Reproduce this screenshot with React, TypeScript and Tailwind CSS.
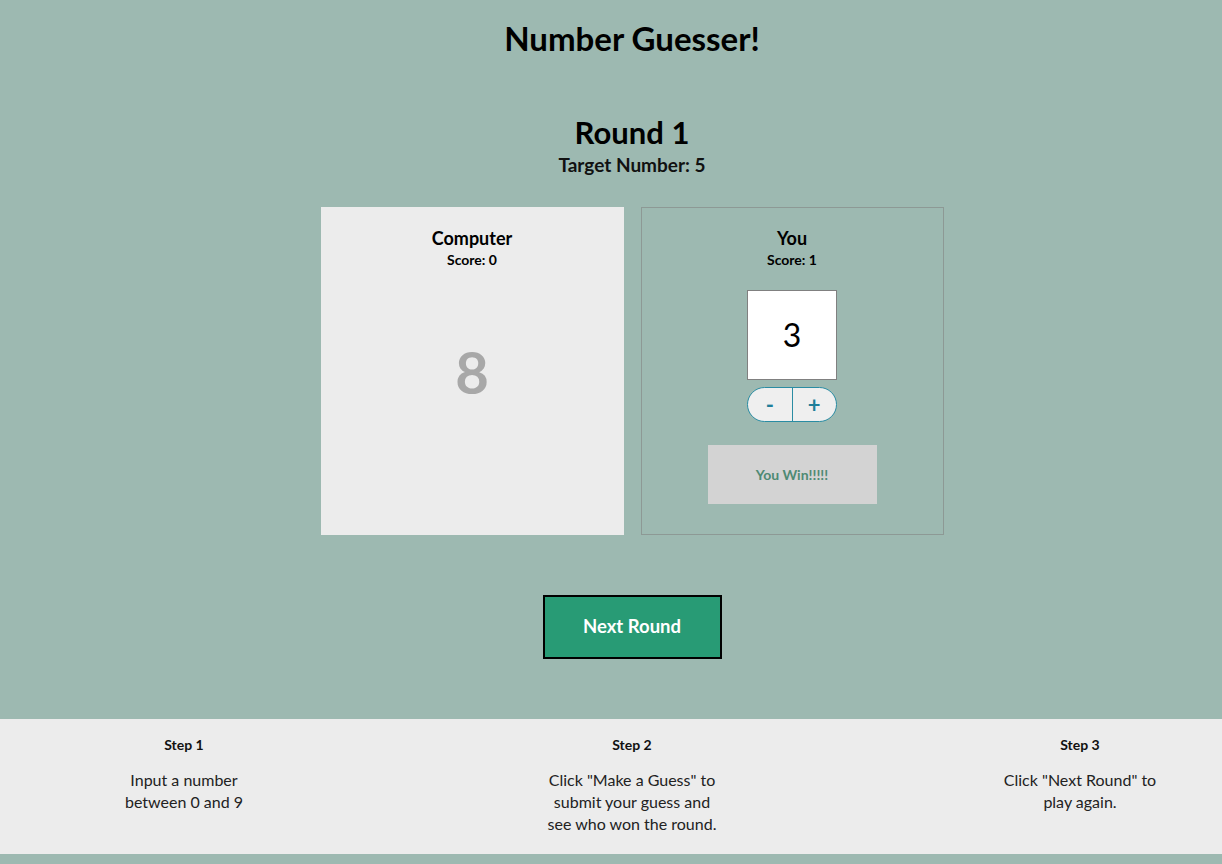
import * as React from 'react';

const font = { fontFamily: 'Lato, "Noto Sans", sans-serif' };

function Step({ title, lines }: { title: string; lines: string[] }) {
  return (
    <div className="w-[200px] text-center">
      <h3 className="text-[14px] leading-[17px] font-bold text-[#111]">{title}</h3>
      <p className="mt-[16px] text-[16px] leading-[22px] text-[#222] whitespace-nowrap">
        {lines.map((l, i) => (
          <React.Fragment key={i}>
            {l}
            {i < lines.length - 1 && <br />}
          </React.Fragment>
        ))}
      </p>
    </div>
  );
}

function App() {
  return (
    <div className="w-full overflow-hidden bg-[#9db9b1] min-h-screen" style={font}>
      <div className="w-[1264px] flex flex-col items-center">
        <h1 className="mt-[19px] text-[33px] leading-[38px] font-bold text-black">Number Guesser!</h1>

        <h2 className="mt-[57px] text-[31px] leading-[36px] font-bold text-black">Round 1</h2>
        <p className="mt-[4px] text-[19px] leading-[22px] font-bold text-[#111]">Target Number: 5</p>

        <div className="mt-[31px] flex gap-[17px]">
          <div className="w-[303px] h-[328px] bg-[#ececec] flex flex-col items-center pt-[20px]">
            <h3 className="text-[18px] leading-[22px] font-bold text-black">Computer</h3>
            <p className="mt-[3px] text-[14px] leading-[16px] font-bold text-black">Score: 0</p>
            <div className="mt-[75px] text-[58px] leading-[58px] font-bold text-[#a8a8a8]">8</div>
          </div>

          <div className="w-[303px] h-[328px] border border-[#8d9995] flex flex-col items-center pt-[19px]">
            <h3 className="text-[18px] leading-[22px] font-bold text-black">You</h3>
            <p className="mt-[3px] text-[14px] leading-[16px] font-bold text-black">Score: 1</p>
            <div className="mt-[22px] w-[90px] h-[90px] bg-white border border-[#808080] flex items-center justify-center text-[32px] text-black">
              3
            </div>
            <div className="mt-[7px] w-[90px] h-[35px] rounded-full border border-[#2a8ca3] bg-[#efefef] flex overflow-hidden">
              <button className="flex-1 border-r border-[#2a8ca3] text-[22px] font-bold text-[#1f7f9a] leading-none">-</button>
              <button className="flex-1 text-[22px] font-bold text-[#1f7f9a] leading-none">+</button>
            </div>
            <div className="mt-[23px] w-[169px] h-[59px] bg-[#d3d3d3] flex items-center justify-center text-[14px] font-bold text-[#4e8a73]">
              You Win!!!!!
            </div>
          </div>
        </div>

        <button className="mt-[60px] w-[179px] h-[64px] bg-[#289b75] border-2 border-black text-white text-[18.5px] font-bold">
          Next Round
        </button>

        <footer className="mt-[60px] mb-[10px] w-full bg-[#ececec] flex justify-between px-[84px] pt-[17px] pb-[19px]">
          <Step title="Step 1" lines={['Input a number', 'between 0 and 9']} />
          <Step title="Step 2" lines={['Click "Make a Guess" to', 'submit your guess and', 'see who won the round.']} />
          <Step title="Step 3" lines={['Click "Next Round" to', 'play again.']} />
        </footer>
      </div>
    </div>
  );
}

export default App;
